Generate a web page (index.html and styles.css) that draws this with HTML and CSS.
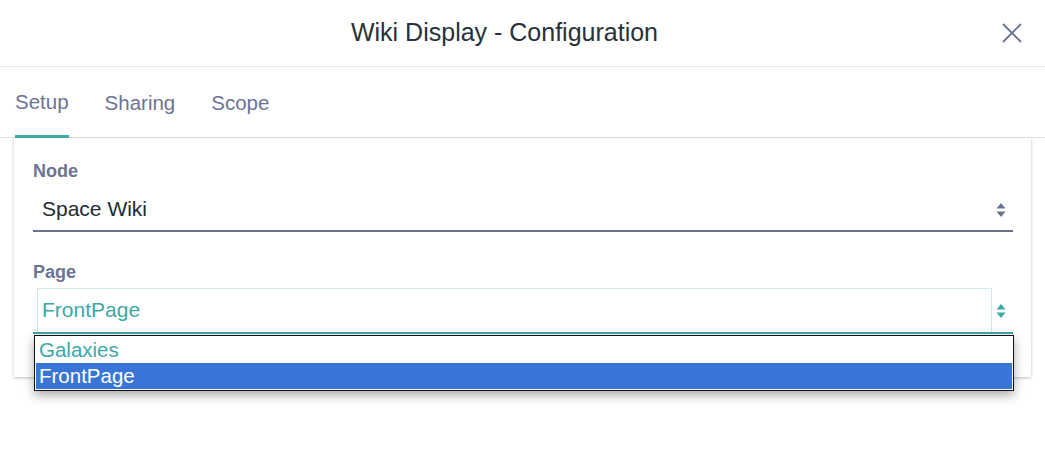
FILE: index.html
```html
<!DOCTYPE html>
<html>
<head>
<meta charset="utf-8">
<link rel="stylesheet" href="styles.css">
</head>
<body>
<div class="modal">
  <header class="head">
    <h1 class="title">Wiki Display - Configuration</h1>
    <button class="close" aria-label="Close">
      <svg width="22" height="22" viewBox="0 0 22 22"><path d="M2 2 L20 20 M20 2 L2 20" stroke="#6b7191" stroke-width="1.8" fill="none"/></svg>
    </button>
  </header>
  <nav class="tabs">
    <span class="tab active">Setup</span>
    <span class="tab">Sharing</span>
    <span class="tab">Scope</span>
  </nav>
  <section class="card">
    <div class="field">
      <label class="label">Node</label>
      <div class="select">
        <span class="value">Space Wiki</span>
        <svg class="arrows" width="10" height="14" viewBox="0 0 10 14"><path d="M5 0 L9.5 5.5 H0.5 Z M5 14 L9.5 8.5 H0.5 Z" fill="#6b7191"/></svg>
      </div>
    </div>
    <div class="field">
      <label class="label">Page</label>
      <div class="select focus">
        <span class="value box">FrontPage</span>
        <svg class="arrows" width="10" height="14" viewBox="0 0 10 14"><path d="M5 0 L9.5 5.5 H0.5 Z M5 14 L9.5 8.5 H0.5 Z" fill="#3ba9a6"/></svg>
        <ul class="menu">
          <li class="opt">Galaxies</li>
          <li class="opt sel">FrontPage</li>
        </ul>
      </div>
    </div>
  </section>
</div>
</body>
</html>
```
FILE: styles.css
```css
* { box-sizing: border-box; }
html, body { height: 100%; }
body {
  margin: 0;
  background: #fff;
  font-family: "Liberation Sans", Arial, sans-serif;
}
.modal { min-height: 100%; }
.head {
  height: 67px;
  border-bottom: 1px solid #e6e7eb;
  display: flex;
  align-items: center;
  justify-content: center;
  padding-right: 36px;
  position: relative;
}
.title {
  margin: 0;
  font-size: 25px;
  font-weight: normal;
  color: #27313a;
  padding-bottom: 2px;
}
.close {
  position: absolute;
  right: 22px;
  top: 22px;
  border: 0;
  background: none;
  padding: 0;
  width: 22px;
  height: 22px;
}
.tabs {
  display: flex;
  gap: 36px;
  padding-left: 15px;
  height: 71px;
  border-bottom: 1px solid #e1e3e8;
  align-items: stretch;
}
.tab {
  font-size: 20.5px;
  color: #6c7394;
  display: flex;
  align-items: center;
  padding-top: 2px;
  border-bottom: 2px solid transparent;
  margin-bottom: -1px;
}
.tab.active { border-bottom: 3px solid #3ba9a6; }
.card {
  margin-left: 14px;
  width: 1017px;
  height: 239px;
  background: #fff;
  box-shadow: 0 1px 3px rgba(0,0,0,0.25);
  padding: 23px 18px 0 19px;
}
.field { margin-bottom: 30px; }
.label {
  display: block;
  font-size: 18px;
  font-weight: bold;
  color: #6c7394;
  margin-bottom: 8px;
}
.select {
  position: relative;
  height: 42px;
  border-bottom: 2px solid #6c7191;
  display: flex;
  align-items: center;
}
.value {
  font-size: 21px;
  color: #222b33;
  padding-left: 9px;
  padding-bottom: 2px;
}
.arrows { position: absolute; right: 7px; top: 13px; }
.select.focus {
  height: 46px;
  border-bottom: 2px solid #3ba9a6;
  align-items: stretch;
  margin-top: -3px;
}
.value.box {
  color: #3ba9a6;
  width: 955px;
  margin-left: 4px;
  border: 1px solid #c9eceb;
  border-bottom: 0;
  padding-left: 4px;
  display: flex;
  align-items: center;
}
.select.focus .arrows { top: 16px; }
.menu {
  position: absolute;
  z-index: 10;
  left: 1px;
  top: 47px;
  width: 980px;
  margin: 0;
  padding: 1px;
  list-style: none;
  background: #fff;
  border: 1px solid #111;
  box-shadow: 0 4px 10px rgba(0,0,0,0.35);
}
.opt {
  font-size: 20.5px;
  height: 26px;
  line-height: 26px;
  padding-left: 3px;
  color: #3ba9a6;
}
.opt.sel { background: #3875d7; color: #fff; }
```
